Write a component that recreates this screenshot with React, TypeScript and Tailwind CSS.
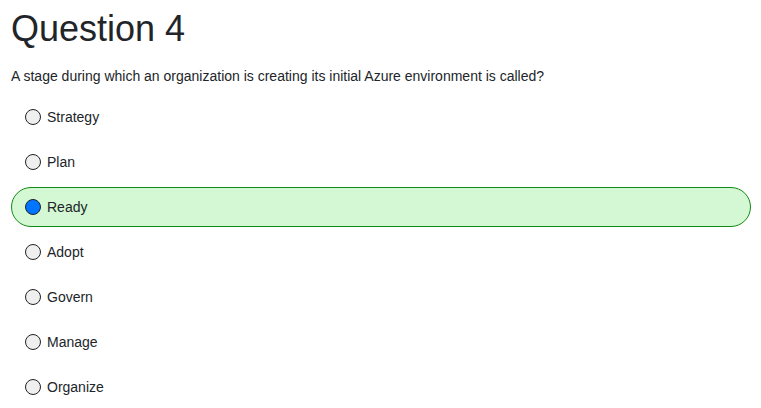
import { useState } from "react";

const options = ["Strategy", "Plan", "Ready", "Adopt", "Govern", "Manage", "Organize"];

export default function App() {
    const [picked, setPicked] = useState("Ready");

    return (
        <main className="min-h-screen bg-white px-[11px] text-[#212529]" style={{ fontFamily: '"Liberation Sans", Arial, sans-serif' }}>
            <h1 className="pt-[7px] text-[36px] leading-[43px]">Question 4</h1>
            <p className="mt-[18px] text-[14px] leading-[16px]">
                A stage during which an organization is creating its initial Azure environment is called?
            </p>
            <div className="mt-[13px] flex w-[740px] flex-col gap-[5px]">
                {options.map((o) => {
                    const on = o === picked;
                    return (
                        <label
                            key={o}
                            onClick={() => setPicked(o)}
                            className={`flex h-[40px] cursor-pointer items-center gap-[6px] rounded-full border pl-[13px] text-[14px] ${
                                on ? "border-[#138a13] bg-[#d3f8d3]" : "border-transparent"
                            }`}
                        >
                            <span
                                className={`h-[16px] w-[16px] rounded-full border-[1.5px] border-[#222] ${
                                    on ? "bg-[#0075ff]" : "bg-[#efefef]"
                                }`}
                            />
                            <span>{o}</span>
                        </label>
                    );
                })}
            </div>
        </main>
    );
}
